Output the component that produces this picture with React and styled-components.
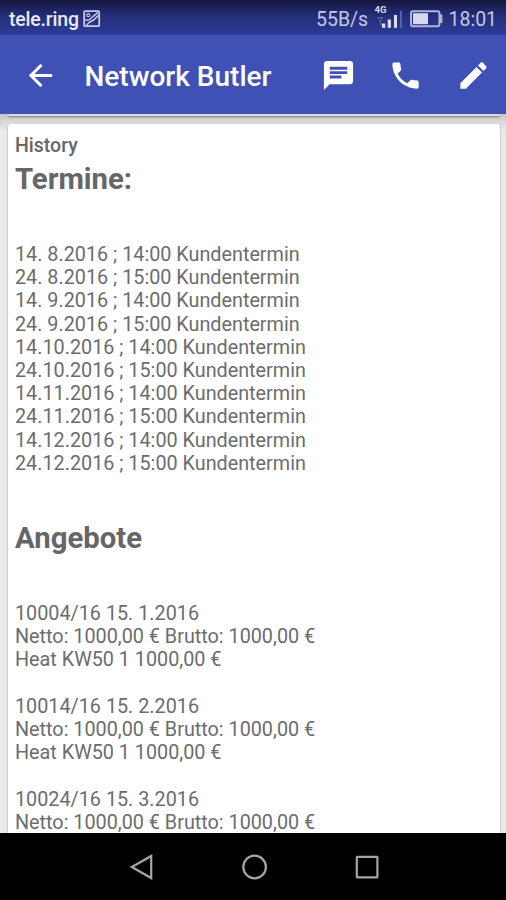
import styled, { createGlobalStyle } from "styled-components";

const appointments = [
  "14. 8.2016 ; 14:00 Kundentermin",
  "24. 8.2016 ; 15:00 Kundentermin",
  "14. 9.2016 ; 14:00 Kundentermin",
  "24. 9.2016 ; 15:00 Kundentermin",
  "14.10.2016 ; 14:00 Kundentermin",
  "24.10.2016 ; 15:00 Kundentermin",
  "14.11.2016 ; 14:00 Kundentermin",
  "24.11.2016 ; 15:00 Kundentermin",
  "14.12.2016 ; 14:00 Kundentermin",
  "24.12.2016 ; 15:00 Kundentermin",
];

const offers = [
  ["10004/16 15. 1.2016", "Netto: 1000,00 € Brutto: 1000,00 €", "Heat KW50 1 1000,00 €"],
  ["10014/16 15. 2.2016", "Netto: 1000,00 € Brutto: 1000,00 €", "Heat KW50 1 1000,00 €"],
  ["10024/16 15. 3.2016", "Netto: 1000,00 € Brutto: 1000,00 €"],
];

const App = () => {
  return (
    <Screen>
      <GlobalStyle />
      <StatusBar>
        <Carrier>tele.ring</Carrier>
        <PictureIcon />
        <StatusRight>
          <Speed>55B/s</Speed>
          <SignalIcon />
          <BatteryIcon />
          <Clock>18:01</Clock>
        </StatusRight>
      </StatusBar>
      <AppBar>
        <MaterialIcon d="M20 11H7.83l5.59-5.59L12 4l-8 8 8 8 1.41-1.41L7.83 13H20v-2z" />
        <Title>Network Butler</Title>
        <Actions>
          <MaterialIcon d="M20 2H4c-1.1 0-1.99.9-1.99 2L2 22l4-4h14c1.1 0 2-.9 2-2V4c0-1.1-.9-2-2-2zM6 9h12v2H6V9zm8 5H6v-2h8v2zm4-6H6V6h12v2z" />
          <MaterialIcon d="M6.62 10.79c1.44 2.83 3.76 5.14 6.59 6.59l2.2-2.2c.27-.27.67-.36 1.02-.24 1.12.37 2.33.57 3.57.57.55 0 1 .45 1 1V20c0 .55-.45 1-1 1-9.39 0-17-7.61-17-17 0-.55.45-1 1-1h3.5c.55 0 1 .45 1 1 0 1.25.2 2.45.57 3.57.11.35.03.74-.25 1.02l-2.2 2.2z" />
          <MaterialIcon d="M3 17.25V21h3.75L17.81 9.94l-3.75-3.75L3 17.25zM20.71 7.04c.39-.39.39-1.02 0-1.41l-2.34-2.34c-.39-.39-1.02-.39-1.41 0l-1.83 1.83 3.75 3.75 1.83-1.83z" />
        </Actions>
      </AppBar>
      <Content>
        <PreviousCard />
        <Card>
          <Label>History</Label>
          <Heading>Termine:</Heading>
          <Group>
            {appointments.map((line) => (
              <Line key={line}>{line}</Line>
            ))}
          </Group>
          <Heading $spaced>Angebote</Heading>
          {offers.map((offer) => (
            <Group key={offer[0]}>
              {offer.map((line) => (
                <Line key={line}>{line}</Line>
              ))}
            </Group>
          ))}
        </Card>
      </Content>
      <NavBar>
        <NavIcon viewBox="0 0 30 30">
          <path d="M4.8 15 24.2 4v22z" />
        </NavIcon>
        <NavIcon viewBox="0 0 30 30">
          <circle cx="14.6" cy="15" r="11.3" />
        </NavIcon>
        <NavIcon viewBox="0 0 30 30">
          <rect x="4.8" y="4.8" width="20.6" height="20.6" rx="0.5" />
        </NavIcon>
      </NavBar>
    </Screen>
  );
};

const MaterialIcon = ({ d }) => (
  <ActionIcon viewBox="0 0 24 24">
    <path d={d} />
  </ActionIcon>
);

const PictureIcon = () => (
  <svg width="18" height="18" viewBox="0 0 18 18" fill="none" stroke="#c6cae4" strokeWidth="1.8">
    <rect x="1.2" y="1.2" width="15" height="15" rx="1" />
    <circle cx="5.3" cy="5.2" r="1.5" strokeWidth="1.2" />
    <path d="M2 9.6c3 1.8 5.2.2 7.5-2.7L14.8 2.6M3.5 15.5c1.7-3.8 4.7-4 7.2-5.5l4.8-4.6" strokeWidth="1.5" />
  </svg>
);

const SignalIcon = () => (
  <SignalBox>
    <Network>4G</Network>
    <svg width="28" height="24" viewBox="0 0 28 24" fill="#d9dcf0">
      <path d="M2 10h1.6v2H2zM5 10h1.6v2H5zM3.5 13h1.6v2H3.5zM4 16h1.4v2H4z" fill="#7078b8" />
      <rect x="6" y="16.5" width="3.2" height="4.3" />
      <rect x="11.7" y="12.5" width="3.2" height="8.3" />
      <rect x="18" y="8" width="3" height="12.8" />
      <rect x="24" y="4" width="2" height="16.8" fill="#5660ae" />
    </svg>
  </SignalBox>
);

const BatteryIcon = () => (
  <Battery width="34" height="18" viewBox="0 0 34 18">
    <rect x="1" y="1.2" width="28.4" height="15" rx="1.8" fill="none" stroke="#b0b4d6" strokeWidth="2" />
    <path d="M30 4.5h2.4v8.5H30z" fill="#b0b4d6" />
    <rect x="3" y="3.2" width="15" height="11" fill="#d7d9ec" />
  </Battery>
);

const GlobalStyle = createGlobalStyle`
  body {
    margin: 0;
    background: #000;
  }
  svg {
    display: block;
    flex-shrink: 0;
  }
`;

const Screen = styled.div`
  display: flex;
  flex-direction: column;
  width: 506px;
  height: 900px;
  overflow: hidden;
  font-family: Roboto, sans-serif;
`;

const StatusBar = styled.div`
  display: flex;
  align-items: center;
  height: 35px;
  flex-shrink: 0;
  box-sizing: border-box;
  padding: 3px 9.5px 0 9px;
  background: linear-gradient(#12163c 0%, #1a2157 18%, #252f7c 50%, #2e3c98 100%);
`;

const Carrier = styled.span`
  width: 74px;
  font-size: 19.5px;
  font-weight: 500;
  letter-spacing: -0.2px;
  white-space: nowrap;
  color: #e8eaf8;
`;

const StatusRight = styled.div`
  display: flex;
  align-items: center;
  margin-left: auto;
  font-size: 19.5px;
  color: #c4c8e2;
`;

const Speed = styled.span`
  width: 59.5px;
`;

const SignalBox = styled.div`
  position: relative;
  width: 34px;
`;

const Network = styled.span`
  position: absolute;
  left: -1px;
  top: -2px;
  font-size: 9.5px;
  font-weight: 700;
  line-height: 10px;
  color: #d9dcf0;
`;

const Battery = styled.svg`
  margin-right: 5px;
`;

const Clock = styled.span`
  width: 48px;
  white-space: nowrap;
`;

const AppBar = styled.div`
  display: flex;
  align-items: center;
  height: 79px;
  flex-shrink: 0;
  box-sizing: border-box;
  padding: 1px 15.5px 0 22.5px;
  background: #3f51b5;
`;

const ActionIcon = styled.svg`
  width: 35px;
  height: 35px;
  fill: #fff;
`;

const Title = styled.h1`
  margin: 3px 0 0 27px;
  font-size: 28px;
  font-weight: 500;
  white-space: nowrap;
  color: #fff;
`;

const Actions = styled.div`
  display: flex;
  gap: 32.3px;
  margin-left: auto;
`;

const Content = styled.div`
  flex: 1;
  min-height: 0;
  overflow: hidden;
  padding: 0 6px 0 7.5px;
  background: linear-gradient(#c4c5c4 0px, #dcdddb 9px, #eaeaea 18px);
`;

/* bottom edge of the card scrolled away under the app bar */
const PreviousCard = styled.div`
  height: 2px;
  margin-bottom: 8px;
  border-radius: 0 0 3px 3px;
  background: #dcdddc;
  box-shadow: 0 1px 2px rgba(0, 0, 0, 0.4);
`;

const Card = styled.div`
  height: 740px;
  box-sizing: border-box;
  padding: 10px 7.5px;
  border-radius: 3px;
  background: #fff;
  box-shadow: 0 1px 2px rgba(0, 0, 0, 0.4);
  color: #666;
`;

const Label = styled.div`
  font-size: 19.5px;
  font-weight: 500;
  line-height: 24px;
`;

const Heading = styled.h2`
  margin: ${(props) => (props.$spaced ? "46px" : "4px")} 0 47px;
  font-size: 29.3px;
  font-weight: 700;
  line-height: 34px;
`;

const Group = styled.div`
  margin-bottom: 23.2px;
`;

const Line = styled.div`
  font-size: 19.8px;
  line-height: 23.2px;
  white-space: nowrap;
  color: #6c6c6c;
`;

const NavBar = styled.div`
  display: flex;
  align-items: center;
  justify-content: center;
  gap: 82.5px;
  height: 67px;
  flex-shrink: 0;
  box-sizing: border-box;
  padding-left: 3px;
  background: #000;
`;

const NavIcon = styled.svg`
  width: 30px;
  height: 30px;
  fill: none;
  stroke: #a6a6a6;
  stroke-width: 2.2;
`;

export default App;
